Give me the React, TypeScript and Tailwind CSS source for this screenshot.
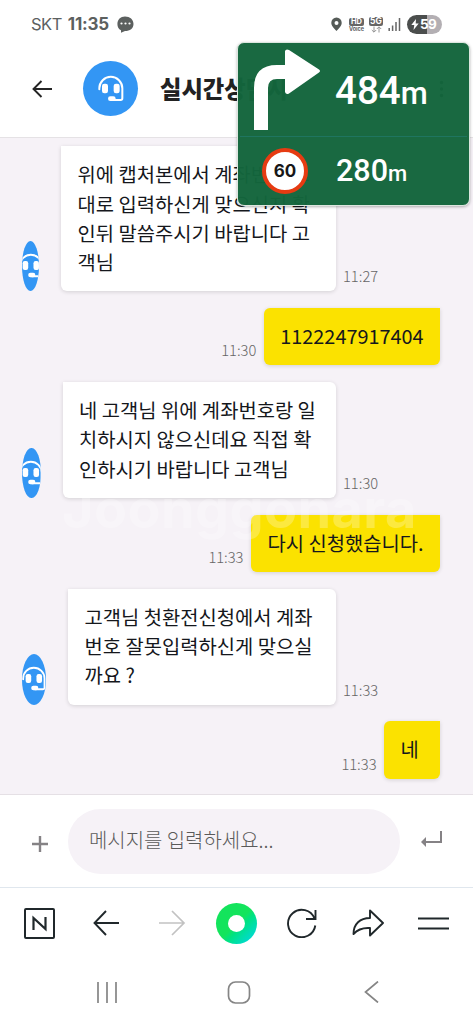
import React from 'react';

const kr = "font-['Noto_Sans_CJK_KR','Noto_Sans_CJK_SC',sans-serif]";

function Headset({ className }: { className: string }) {
  return (
    <svg viewBox="0 0 84 84" className={`shrink-0 ${className}`} fill="none">
      <path d="M7 43V40A34.500 34.500 0 0 1 76 40V70Q76 75 71 75H45" stroke="white" strokeWidth="6" strokeLinecap="round" />
      <rect x="15" y="26" width="18" height="29" rx="7" fill="white" />
      <rect x="50" y="26" width="18" height="29" rx="7" fill="white" />
      <rect x="33" y="64" width="23" height="14" rx="7" fill="white" />
    </svg>
  );
}

function Time({ children }: { children: string }) {
  return <span className="mb-[5px] text-[14.7px] leading-[20px] font-light text-[#666]">{children}</span>;
}

function Received({ lines, time, avatar }: { lines: string[]; time: string; avatar: string }) {
  return (
    <div className="flex items-end pl-[22px]">
      <div className={`flex h-[50.5px] shrink-0 items-center justify-center overflow-hidden rounded-[50%] bg-[#3396f4] ${avatar}`}>
        <Headset className="size-[26px]" />
      </div>
      <div className="mr-[7px] ml-[22px] flex-1 rounded-[6px] rounded-tl-none bg-white px-[16.500px] pt-[13px] pb-[15px] shadow-[0_1px_4px_rgba(0,0,0,0.14)]">
        {lines.map((line) => (
          <p key={line} className="text-[19.85px] leading-[29.3px] whitespace-nowrap text-[#15171c]">{line}</p>
        ))}
      </div>
      <div className="flex w-[130px] shrink-0">
        <Time>{time}</Time>
      </div>
    </div>
  );
}

function Sent({ text, time }: { text: string; time: string }) {
  return (
    <div className="flex items-end justify-end gap-[7.500px] pr-[33px]">
      <Time>{time}</Time>
      <div className="min-w-[56px] rounded-[6px] rounded-tr-none bg-[#fbe200] px-[16.500px] pt-[13px] pb-[15px] shadow-[0_1px_4px_rgba(0,0,0,0.14)]">
        <p className="text-[19.85px] leading-[29.3px] text-[#15171c]">{text}</p>
      </div>
    </div>
  );
}

function StatusBar() {
  return (
    <div className="flex h-[49px] items-center pr-[31px] pl-[31px] font-[Inter,sans-serif] text-[#5c605f]">
      <span className="text-[16.5px] tracking-[-0.5px]">SKT</span>
      <span className="ml-[6px] text-[17px] font-bold tracking-[-0.2px]">11:35</span>
      <svg className="ml-[8px] size-[17px]" viewBox="0 0 17 17">
        <path d="M8 .5C13 .5 16.500 3.500 16.500 8C16.500 12.500 13 15 8 15L4 16.800V14.300C1.500 13.200 .4 11 .4 8C.4 3.500 3.500 .5 8 .5Z" fill="#5c605f" />
        <circle cx="4.500" cy="7.500" r="1.100" fill="white" /><circle cx="8.500" cy="7.500" r="1.100" fill="white" /><circle cx="12.500" cy="7.500" r="1.100" fill="white" />
      </svg>
      <div className="flex-1" />
      <svg className="h-[15px] w-[11px]" viewBox="0 0 11 15">
        <path fillRule="evenodd" d="M5.500 .5A5.200 5.200 0 0 1 10.700 5.700C10.700 9 8 11 5.500 14C3 11 .3 9 .3 5.700A5.200 5.200 0 0 1 5.500 .5ZM5.500 4A2 2 0 1 0 5.500 8A2 2 0 1 0 5.500 4Z" fill="#555b57" />
      </svg>
      <div className="ml-[7px] flex w-[15px] flex-col items-center">
        <span className="flex h-[8px] w-[15px] items-center justify-center rounded-[2px] bg-[#666] text-[7.5px] leading-none font-bold text-white">HD</span>
        <span className="text-[5.5px] leading-[6px] font-bold">Voice</span>
      </div>
      <div className="ml-[5px] flex w-[14px] flex-col items-center">
        <span className="flex h-[9px] w-[14px] items-center justify-center rounded-[2px] bg-[#666] text-[8.5px] leading-none font-bold text-white">5G</span>
        <svg className="h-[7px] w-[11px]" viewBox="0 0 11 7" fill="none" stroke="#8a8a8a" strokeWidth="0.900">
          <path d="M3 .5V6M.8 4L3 6.200L5.200 4M8 6.500V1M5.800 3L8 .8L10.200 3" />
        </svg>
      </div>
      <svg className="ml-[5px] h-[13px] w-[13px]" viewBox="0 0 13 13" stroke="#666" strokeWidth="1.500">
        <path d="M1.200 10V13M4.600 7.500V13M8 4V13M11.500 0V13" />
      </svg>
      <div className="ml-[6px] flex h-[19px] w-[35px] items-center rounded-full bg-linear-to-r from-[#4b4e4d] from-58% to-[#b3afb3] to-58% pl-[4px]">
        <svg className="h-[11px] w-[8px]" viewBox="0 0 8 11"><path d="M5 0L.3 6H3.300L2.500 11L7.700 4.500H4.700Z" fill="white" /></svg>
        <span className="ml-px text-[13.5px] leading-none font-bold tracking-[-0.6px] text-white">59</span>
      </div>
    </div>
  );
}

function Directions() {
  return (
    <div className="absolute top-[42px] left-[237px] flex h-[164px] w-[233px] flex-col rounded-[7px] border border-[#dce6df] bg-[rgba(19,101,60,0.975)] font-[Roboto,sans-serif] font-medium text-white shadow-[0_1px_3px_rgba(0,0,0,0.3)]">
      <div className="mx-[2px] flex h-[94px] items-start border-b border-[#1f7560]">
        <svg className="mt-[5px] ml-[12px] h-[84px] w-[70px] shrink-0" viewBox="0 0 70 84">
          <path d="M2 82V40Q2 17 25 17H33V3Q34 .5 37 2L67 21.500Q69 23 67 24.500L37 45.500Q34 47 33 44V31H25Q16 31 16 40V82Z" fill="white" />
        </svg>
        <p className="mt-[25px] ml-[13px] text-[38.500px] leading-[46px] whitespace-nowrap">484<span className="text-[31px]">m</span></p>
      </div>
      <div className="flex flex-1 items-center pl-[24px]">
        <div className="flex size-[46px] items-center justify-center rounded-full border-[4px] border-[#e63b12] bg-white pt-px font-[Inter,sans-serif] text-[17px] font-bold text-[#171717]">60</div>
        <p className="mt-[2px] ml-[28px] text-[30.500px] leading-[36px] whitespace-nowrap">280<span className="text-[22px]">m</span></p>
      </div>
    </div>
  );
}

export default function App() {
  return (
    <div className={`relative flex h-[1024px] w-[473px] flex-col overflow-hidden bg-white ${kr}`}>
      <StatusBar />
      <header className="flex h-[89px] shrink-0 items-center border-b border-[#e5e2e5] pb-[9px] pl-[32px]">
        <svg className="h-[18px] w-[20px]" viewBox="0 0 20 18" fill="none" stroke="#252525" strokeWidth="1.900">
          <path d="M20 9H1.500M9.500 1L1.500 9L9.500 17" />
        </svg>
        <div className="ml-[31px] flex size-[55px] items-center justify-center rounded-full bg-[#3396f4]">
          <Headset className="size-[28px]" />
        </div>
        <h1 className="ml-[22px] flex-1 text-[23.3px] font-black text-[#222]">실시간상담사</h1>
        <svg className="mr-[29px] h-[18px] w-[5px]" viewBox="0 0 5 18" fill="#222">
          <circle cx="2.500" cy="2.500" r="1.800" /><circle cx="2.500" cy="9" r="1.800" /><circle cx="2.500" cy="15.500" r="1.800" />
        </svg>
      </header>

      <main className="relative flex h-[656px] shrink-0 flex-col gap-[16.7px] bg-[#f6f2f7] pt-[8.300px]">
        <Received avatar="w-[17px]" time="11:27" lines={['위에 캡처본에서 계좌번호 그', '대로 입력하신게 맞으신지 확', '인뒤 말씀주시기 바랍니다 고', '객님']} />
        <Sent time="11:30" text="1122247917404" />
        <Received avatar="w-[18.5px]" time="11:30" lines={['네 고객님 위에 계좌번호랑 일', '치하시지 않으신데요 직접 확', '인하시기 바랍니다 고객님']} />
        <Sent time="11:33" text="다시 신청했습니다." />
        <Received avatar="w-[24px]" time="11:33" lines={['고객님 첫환전신청에서 계좌', '번호 잘못입력하신게 맞으실', '까요 ?']} />
        <Sent time="11:33" text="네" />
        <div className="pointer-events-none absolute top-[338px] left-[62px] font-[Inter,sans-serif] text-[54px] leading-[66px] font-bold tracking-[0.4px] whitespace-nowrap text-white/25">Joonggonara</div>
      </main>

      <div className="flex h-[93px] shrink-0 items-center border-t border-[#e5e0e5] pl-[32px]">
        <svg className="mt-[5px] size-[16px]" viewBox="0 0 16 16" stroke="#858285" strokeWidth="2.400"><path d="M8 0V16M0 8H16" /></svg>
        <div className="ml-[20px] flex h-[65px] w-[332px] items-center rounded-full bg-[#f6f2f7] pb-[2px] pl-[21px] text-[19.95px] font-light text-[#5a5a5a]">메시지를 입력하세요...</div>
        <svg className="mb-[4px] ml-[20px] h-[18px] w-[23px]" viewBox="0 0 23 18" fill="none" stroke="#858285" strokeWidth="2">
          <path d="M21 1V12H5" /><path d="M6 7L1 12L6 17Z" fill="#858285" stroke="none" />
        </svg>
      </div>

      <div className="flex h-[71px] shrink-0 items-center border-t border-[#e0e7ee] pl-[24px]">
        <svg className="h-[31px] w-[31px]" viewBox="0 0 31 31" fill="none" stroke="#20282b">
          <rect x="1" y="1" width="29" height="29" rx="1" strokeWidth="2" />
          <path d="M9.500 22V10L21.500 21V9" strokeWidth="2.200" />
        </svg>
        <svg className="ml-[38px] h-[26px] w-[27px]" viewBox="0 0 27 26" fill="none" stroke="#20282b" strokeWidth="1.900"><path d="M26 13H1.500M13 1L1.500 13L13 25" /></svg>
        <svg className="ml-[39px] h-[26px] w-[27px]" viewBox="0 0 27 26" fill="none" stroke="#c2c2c2" strokeWidth="1.700"><path d="M0 13H25M13 1L25 13L13 25" /></svg>
        <div className="ml-[30px] flex size-[41px] items-center justify-center rounded-full bg-linear-to-br from-[#13e45c] from-50% to-[#00d4ef]">
          <div className="size-[17px] rounded-full bg-white" />
        </div>
        <svg className="ml-[30px] h-[30px] w-[30px]" viewBox="0 0 30 30" fill="none" stroke="#20282b" strokeWidth="1.900">
          <path d="M28.300 17.500A13.700 13.700 0 1 1 27.500 10.500M28.500 2V11H19" />
        </svg>
        <svg className="ml-[35px] h-[28px] w-[32px]" viewBox="0 0 32 28" fill="none" stroke="#20282b" strokeWidth="1.900" strokeLinejoin="round">
          <path d="M18 1.500L31 14L18 26.500V19C11 18.500 6 20 1.500 25C1.500 15 8 9 18 9Z" />
        </svg>
        <svg className="ml-[34px] h-[13px] w-[31px]" viewBox="0 0 31 13" stroke="#20282b" strokeWidth="2"><path d="M0 1.500H31M0 11.500H31" /></svg>
      </div>

      <div className="flex h-[66px] shrink-0 items-center pt-[2px] pl-[96px]">
        <svg className="h-[21px] w-[22px]" viewBox="0 0 22 21" stroke="#858585" strokeWidth="1.700"><path d="M2 0V21M11 0V21M20 0V21" /></svg>
        <svg className="ml-[109px] h-[23px] w-[24px]" viewBox="0 0 24 23" fill="none" stroke="#858585" strokeWidth="1.700"><rect x="1.500" y="1" width="21" height="21" rx="7" /></svg>
        <svg className="ml-[113px] h-[22px] w-[15px]" viewBox="0 0 15 22" fill="none" stroke="#858585" strokeWidth="1.700"><path d="M14 .5L1.500 11L14 21.500" /></svg>
      </div>

      <Directions />
    </div>
  );
}
